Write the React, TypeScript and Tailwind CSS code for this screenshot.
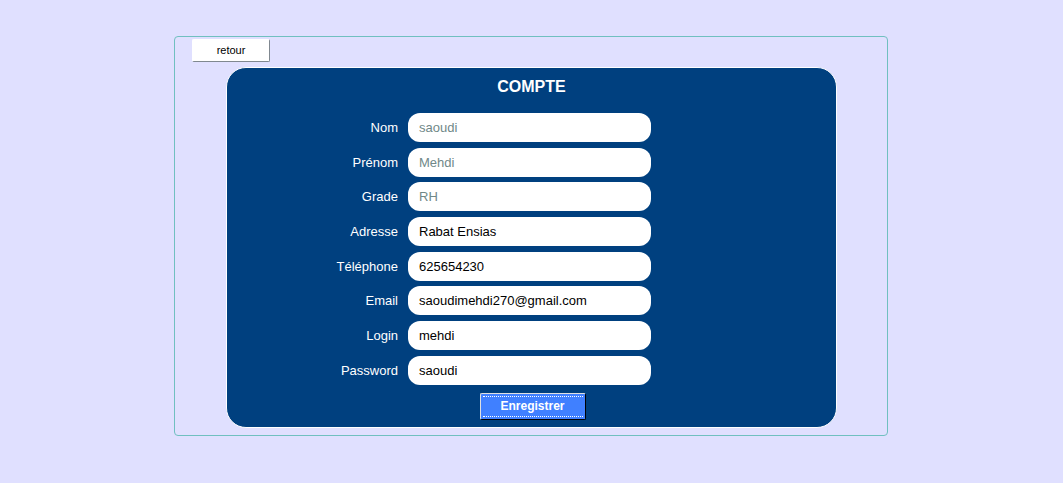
import React from "react";

const rows: { label: string; value: string; ro?: boolean }[] = [
  { label: "Nom", value: "saoudi", ro: true },
  { label: "Prénom", value: "Mehdi", ro: true },
  { label: "Grade", value: "RH", ro: true },
  { label: "Adresse", value: "Rabat Ensias" },
  { label: "Téléphone", value: "625654230" },
  { label: "Email", value: "saoudimehdi270@gmail.com" },
  { label: "Login", value: "mehdi" },
  { label: "Password", value: "saoudi" },
];

export default function App() {
  return (
    <div
      className="w-[1063px] h-[483px] bg-[#e0e0ff] pt-[36px] overflow-hidden"
      style={{ fontFamily: '"Liberation Sans", Arial, sans-serif' }}
    >
      <div className="ml-[174px] w-[714px] h-[400px] border border-[#70c0c0] rounded-[4px] pt-[2px] pl-[17px]">
        <button className="block w-[78px] h-[23px] bg-white border border-white border-r-[#808890] border-b-[#808890] rounded-[2px] text-[11px] text-black leading-none">
          retour
        </button>
        <div className="mt-[5px] ml-[34px] w-[611px] h-[361px] bg-[#00407f] border border-white rounded-[20px] flex flex-col items-start">
          <div className="w-full text-center text-white font-bold text-[16px] leading-[18px] mt-[10px]">
            COMPTE
          </div>
          <div className="flex flex-col gap-[5.7px] mt-[17px]">
            {rows.map((r) => (
              <div key={r.label} className="flex items-center h-[29px]">
                <div className="w-[171px] text-right text-white text-[13px] leading-none">
                  {r.label}
                </div>
                <div
                  className={`ml-[10px] w-[243px] h-[29px] bg-white rounded-[12px] pl-[11px] flex items-center text-[13px] leading-none ${
                    r.ro ? "text-[#708888]" : "text-black"
                  }`}
                >
                  {r.value}
                </div>
              </div>
            ))}
          </div>
          <div className="w-full flex justify-center mt-[8px]">
            <button className="block ml-[2px] w-[106px] h-[27px] bg-[#4080ff] border border-[#e0e0e0] border-r-black border-b-black rounded-[2px] px-[2px] py-[2px]">
              <div className="w-full h-full border-y border-dotted border-white flex items-center justify-center text-white font-bold text-[12px] leading-none">
                Enregistrer
              </div>
            </button>
          </div>
        </div>
      </div>
    </div>
  );
}
